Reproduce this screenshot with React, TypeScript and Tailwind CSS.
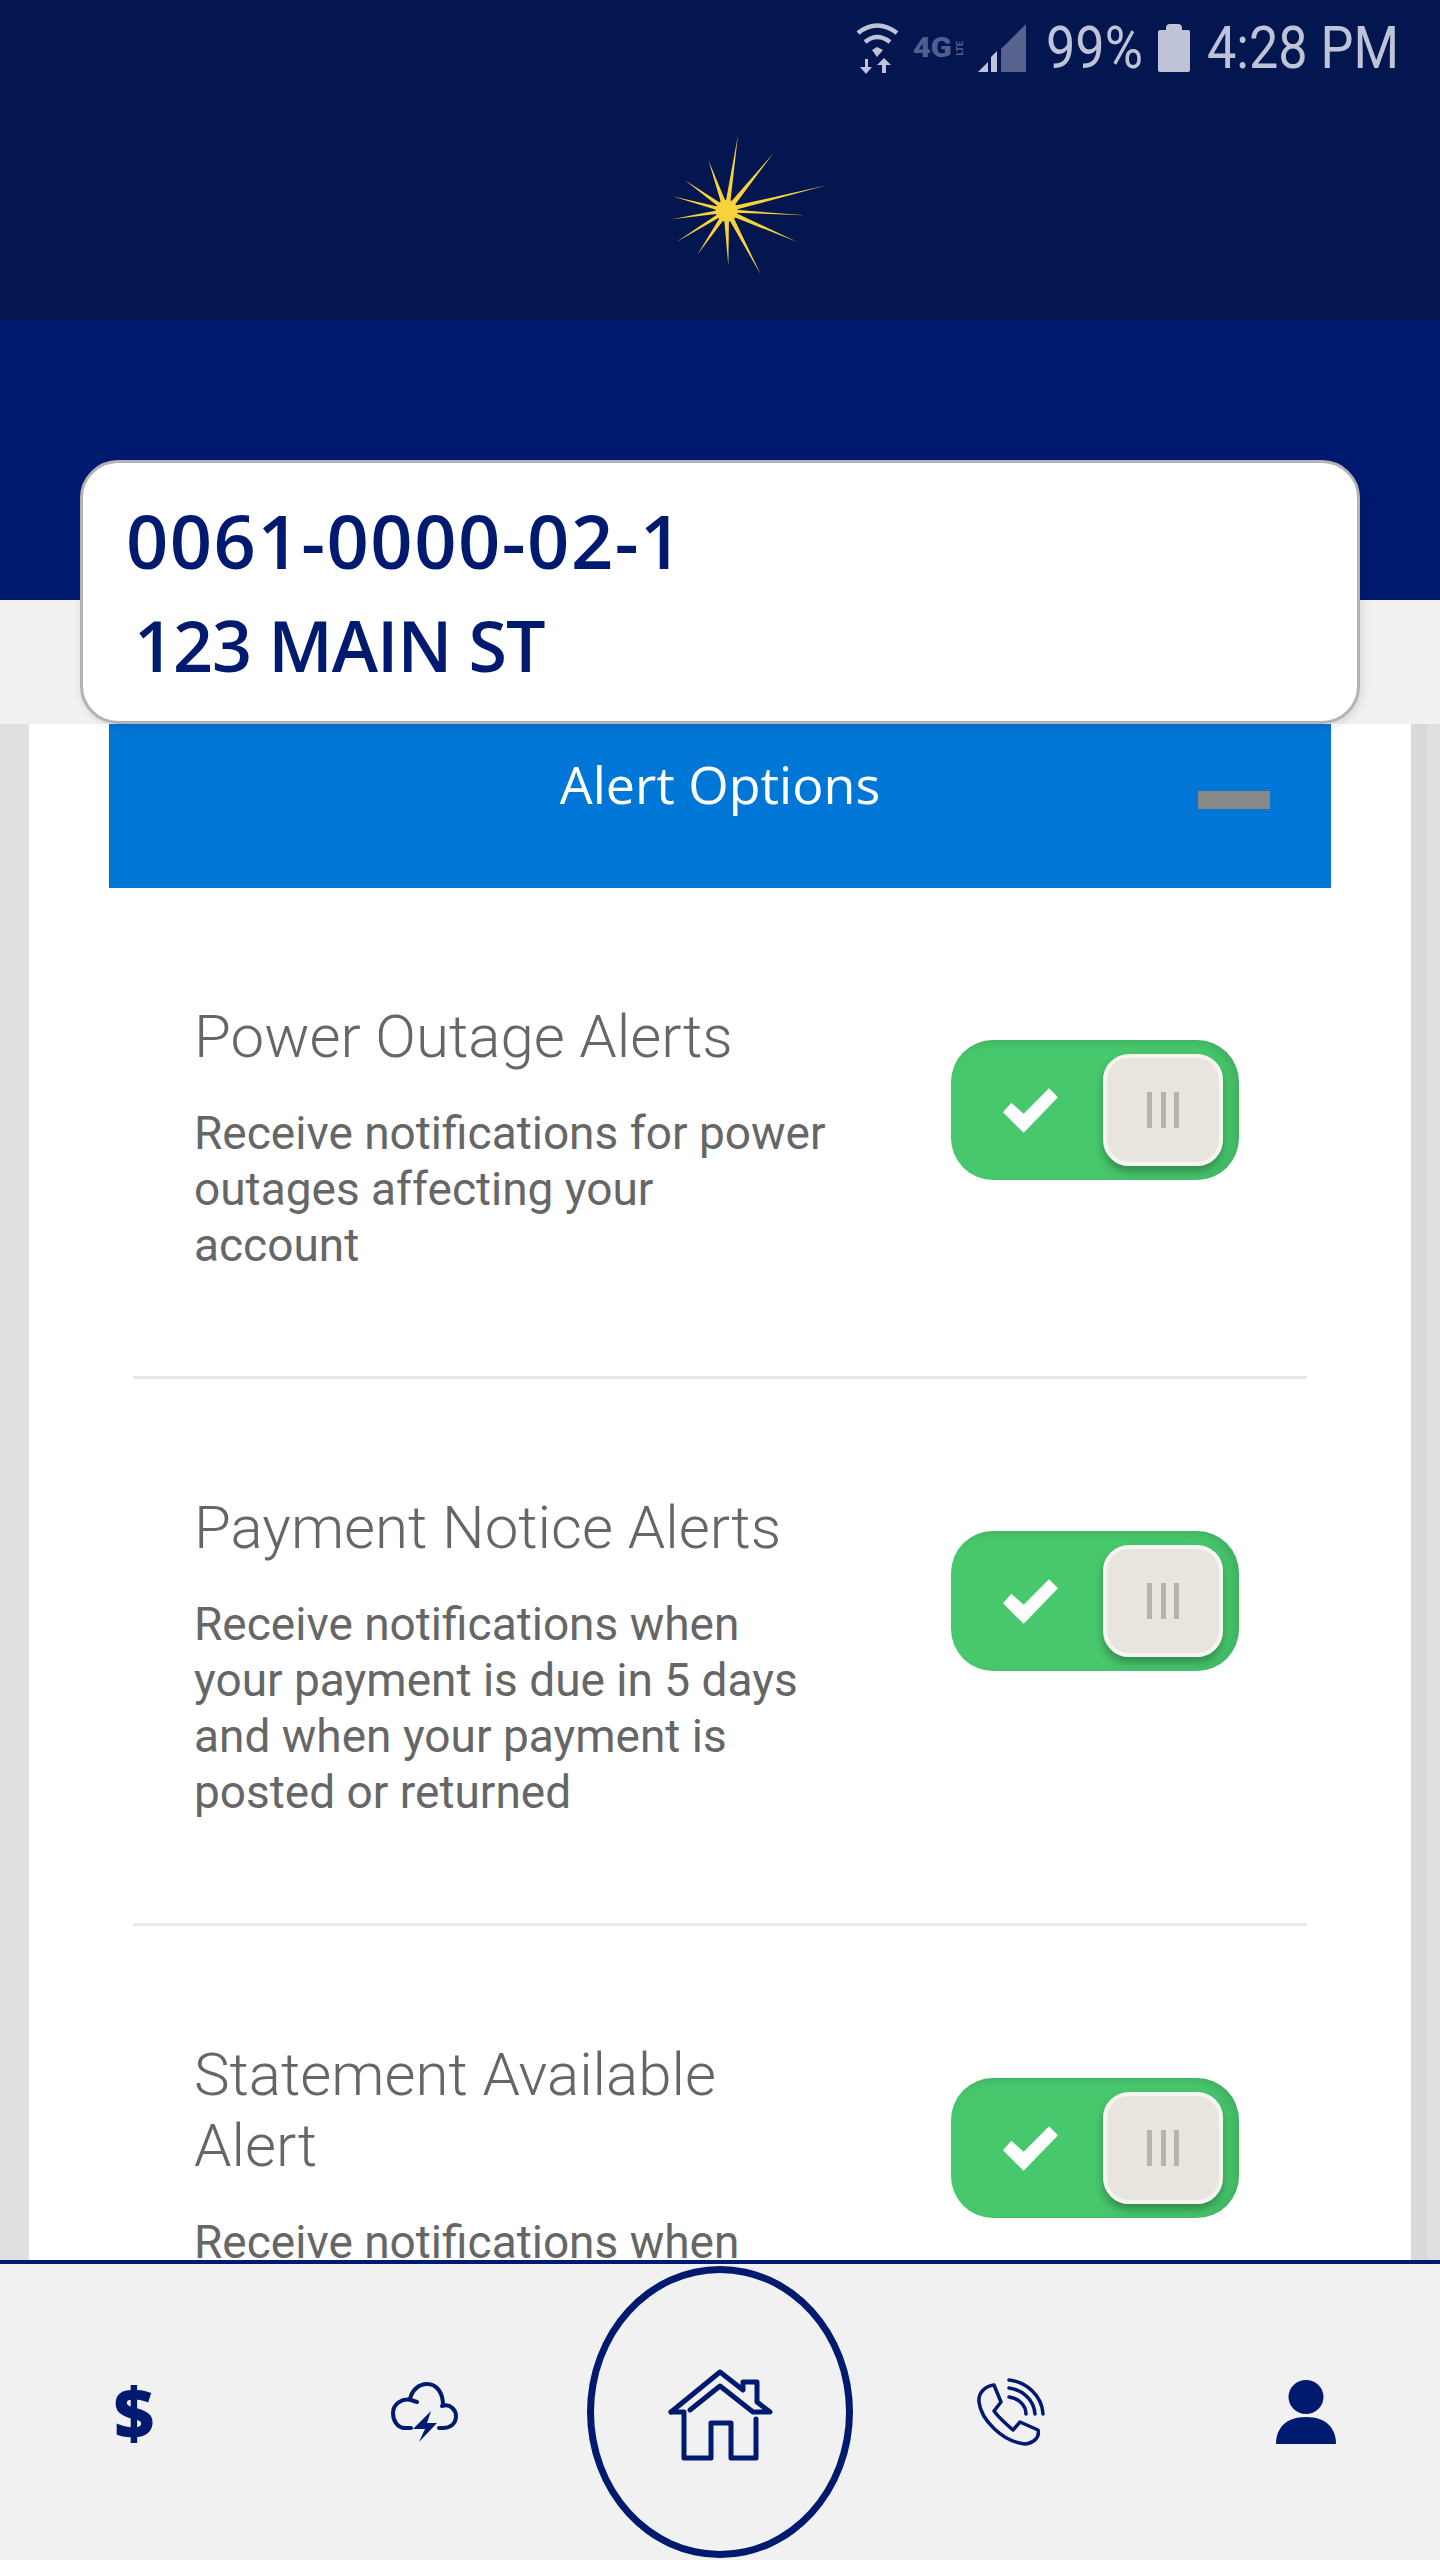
const tips = [
  [294, 45], [400, 100], [560, 196], [495, 286], [472, 366], [363, 465], [265, 437],
  [172, 404], [108, 367], [95, 298], [97, 229], [135, 181], [205, 120],
].map(([x, y]) => [x / 3, y / 3])

const starCx = 260 / 3
const starCy = 272 / 3

const starPoints = tips
  .map(([x, y], i) => {
    const next = tips[(i + 1) % tips.length]
    const a1 = Math.atan2(y - starCy, x - starCx)
    let a2 = Math.atan2(next[1] - starCy, next[0] - starCx)
    if (a2 < a1) a2 += Math.PI * 2
    const mid = (a1 + a2) / 2
    return `${x},${y} ${starCx + Math.cos(mid) * 9},${starCy + Math.sin(mid) * 9}`
  })
  .join(" ")

const Star = () => (
  <svg width="200" height="170" viewBox="0 0 200 170">
    <polygon points={starPoints} fill="#f8d23c" />
    <circle cx={starCx} cy={starCy} r="11" fill="#f8d23c" />
  </svg>
)

const StatusBar = () => (
  <div className="flex h-[96px] items-center justify-end pr-[41px] font-['Roboto',sans-serif] text-[60px] text-[#bfc3d8]">
    <svg width="48" height="54" viewBox="0 0 48 54" className="mr-[12px]">
      <g fill="none" stroke="#bfc3d8" strokeWidth="4.5">
        <path d="M5 12 Q24 -3 44 12" />
        <path d="M12 21 Q24 11 37 21" />
      </g>
      <polygon points="19,29 24,26 30,29 24,36" fill="#bfc3d8" />
      <path d="M12 38 V46 H7 L13 53 L19 46 H15 V38 Z" fill="#bfc3d8" />
      <path d="M29 52 V44 H24 L31 37 L38 44 H33 V52 Z" fill="#bfc3d8" />
    </svg>
    <div className="mr-[11px] flex h-[24px] w-[54px] items-center text-[#525f8c]">
      <span className="w-[43px] origin-left scale-x-[1.1] text-[28px] leading-none font-black">4G</span>
      <span className="rotate-180 text-[9px] leading-none font-bold [writing-mode:vertical-rl]">LTE</span>
    </div>
    <svg width="48" height="48" viewBox="0 0 48 48" className="mr-[20px]">
      <polygon points="0,48 10,38 10,48" fill="#bfc3d8" />
      <polygon points="13,48 13,33 19,27 19,48" fill="#bfc3d8" />
      <polygon points="23,48 23,25 48,0 48,48" fill="#56638f" />
    </svg>
    <div className="mr-[18px] w-[94px] origin-left scale-x-[0.87] leading-none whitespace-nowrap">99%</div>
    <svg width="32" height="48" viewBox="0 0 32 48" className="mr-[17px]">
      <path d="M8 4 Q8 0 12 0 H20 Q24 0 24 4 V6 H30 Q32 6 32 8 V46 Q32 48 30 48 H2 Q0 48 0 46 V8 Q0 6 2 6 H8 Z" fill="#bfc3d8" />
    </svg>
    <div className="w-[192px] origin-left scale-x-[0.87] leading-none whitespace-nowrap">4:28 PM</div>
  </div>
)

const Toggle = () => (
  <div className="mt-[39px] flex h-[140px] w-[288px] shrink-0 items-center justify-between rounded-[42px] bg-[#48c86d] pr-[16px] pl-[52px] shadow-[inset_-6px_3px_8px_rgba(0,0,0,0.12)]">
    <svg width="55" height="45" viewBox="250 208 165 134">
      <polygon points="250,280 275,252 312,285 388,208 415,235 312,342" fill="#ffffff" />
    </svg>
    <div className="flex h-[112px] w-[120px] items-center justify-center gap-[8.5px] rounded-[26px] border-4 border-[#f7f5f1] bg-[#e8e5df] shadow-[0_6px_10px_rgba(0,0,0,0.3)]">
      <div className="h-[36px] w-[5px] bg-[#b5b3ae]" />
      <div className="h-[36px] w-[5px] bg-[#b5b3ae]" />
      <div className="h-[36px] w-[5px] bg-[#b5b3ae]" />
    </div>
  </div>
)

const AlertRow = ({ title, text, line = "border-[#e8e8e8]" }: { title: string; text: string; line?: string }) => (
  <div className={`mx-[104px] flex justify-between border-b-[3px] pt-[113px] pr-[68px] pb-[103px] pl-[61px] ${line}`}>
    <div className="w-[636px] font-['Roboto',sans-serif] text-[#666666]">
      <div className="text-[60px] leading-[71px] font-light">{title}</div>
      <div className="mt-[33px] text-[46px] leading-[56px]">{text}</div>
    </div>
    <Toggle />
  </div>
)

const Footer = () => (
  <div className="flex h-[300px] shrink-0 justify-center border-t-4 border-[#001a70] bg-[#f1f1f1] text-[#001a70]">
    <div className="flex w-[293px] shrink-0 items-center justify-center font-['Open_Sans',sans-serif] text-[70px] leading-none font-extrabold">$</div>
    <div className="flex w-[293px] shrink-0 items-center justify-center">
      <svg width="100" height="85" viewBox="0 0 100 85" fill="none" stroke="#001a70" strokeWidth="4" strokeLinecap="round">
        <path d="M34 58 H28 C20 58 16 50 16 43 C16 34 25 28 34 30 L40 32" />
        <path d="M33 29 C35 20 42 14 50 14 C60 14 66 23 66 35" />
        <path d="M65 36 C74 33 79 41 79 46 C79 54 73 58 66 58 H62" />
        <polygon points="54,41 36,59 48,59 42,72 60,53 50,53" fill="#001a70" stroke="none" />
      </svg>
    </div>
    <div className="flex w-[293px] shrink-0 items-center justify-center">
      <div className="flex h-[292px] w-[266px] items-center justify-center rounded-[50%] border-[7px] border-[#001a70]">
        <svg width="140" height="120" viewBox="0 0 140 120" fill="none" stroke="#001a70" strokeWidth="5" strokeLinejoin="round" strokeLinecap="round">
          <path d="M21 60 L70 20 L93 38 V30 H107 V50 L120 60 H103 L70 34 L40 58" />
          <path d="M21 60 H34 V106 H61 V71 H81 V106 H106 V67" />
        </svg>
      </div>
    </div>
    <div className="flex w-[293px] shrink-0 items-center justify-center">
      <svg width="100" height="85" viewBox="0 0 100 85" fill="none" stroke="#001a70" strokeWidth="3.5" strokeLinecap="round">
        <path d="M31 15 L38 32 L31 41 C36 48 43 54 50 60 L57 52 L75 60 C77 68 70 73 62 74 C40 72 18 50 16 32 C15 23 22 16 31 15 Z" strokeLinejoin="round" />
        <path d="M46 10 C64 12 79 26 80 44" />
        <path d="M46 18 C60 20 71 30 72 44" />
        <path d="M46 27 C55 28 63 35 63 44" />
      </svg>
    </div>
    <div className="flex w-[293px] shrink-0 items-center justify-center">
      <svg width="60" height="64" viewBox="0 0 60 64" fill="#001a70">
        <ellipse cx="30" cy="17" rx="17.5" ry="17" />
        <path d="M0 64 C0 48 10 37 30 37 C50 37 60 48 60 64 Z" />
      </svg>
    </div>
  </div>
)

const App = () => {
  return (
    <div className="flex h-[2560px] w-[1440px] flex-col overflow-hidden bg-[#e0e0e2]">
      <div className="h-[320px] shrink-0 bg-[#031650]">
        <StatusBar />
        <div className="mt-[24px] ml-[640px] w-[200px]">
          <Star />
        </div>
      </div>
      <div className="h-[280px] shrink-0 bg-[#001a70] shadow-[0_2px_4px_rgba(0,0,0,0.2)]" />
      <div className="h-[124px] shrink-0 bg-[#f1f1f1] px-[80px]">
        <div className="relative z-10 -mt-[140px] h-[264px] rounded-[38px] border-[3px] border-[#b3b3b3] bg-white pt-[34px] font-['Open_Sans',sans-serif] font-semibold text-[#001a70] shadow-[2px_2px_8px_rgba(0,0,0,0.12)]">
          <div className="pl-[43px] text-[74px] leading-[88px] tracking-[1.5px]">0061-0000-02-1</div>
          <div className="mt-[18px] pl-[51px] text-[70px] leading-[84px] tracking-[-1px]">123 MAIN ST</div>
        </div>
      </div>
      <div className="flex min-h-0 flex-1">
        <div className="w-[29px] shrink-0" />
        <div className="min-w-0 flex-1 overflow-hidden bg-white">
          <div className="mx-[80px] grid h-[164px] grid-cols-[1fr_auto_1fr] bg-[#0076d6] text-white">
            <div />
            <div className="pt-[24px] font-['Open_Sans',sans-serif] text-[52px] leading-[72px]">Alert Options</div>
            <div className="flex justify-end pt-[67px] pr-[61px]">
              <div className="h-[18px] w-[72px] bg-[#888888]" />
            </div>
          </div>
          <AlertRow title="Power Outage Alerts" text="Receive notifications for power outages affecting your account" />
          <AlertRow
            title="Payment Notice Alerts"
            text="Receive notifications when your payment is due in 5 days and when your payment is posted or returned"
            line="border-[#f0e8e8]"
          />
          <AlertRow title="Statement Available Alert" text="Receive notifications when your statement is available" />
        </div>
        <div className="w-[29px] shrink-0 bg-[linear-gradient(to_right,#d9d9db_16px,#e0e0e2_16px)]" />
      </div>
      <Footer />
    </div>
  )
}

export default App
